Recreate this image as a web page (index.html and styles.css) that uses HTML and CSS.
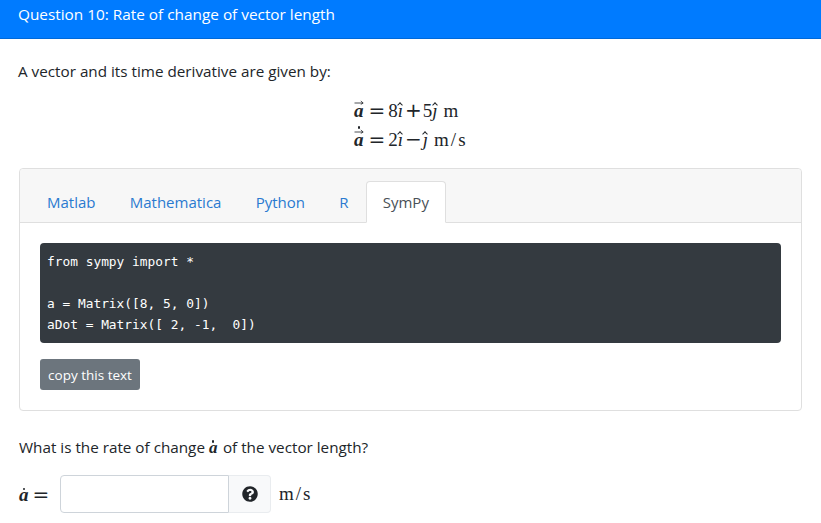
FILE: index.html
```html
<!DOCTYPE html>
<html lang="en">
<head>
    <meta charset="UTF-8">
    <meta name="viewport" content="width=device-width, initial-scale=1.0">
    <title>Question 10</title>
    <link rel="stylesheet" href="styles.css">
</head>
<body>
    <div class="question-header">Question 10: Rate of change of vector length</div>
    <div class="question-body">
        <p class="intro">A vector and its time derivative are given by:</p>
        <div class="equations">
            <div class="eq"><span class="vec"><svg class="arrow" viewBox="0 0 10 5"><path d="M0.5 3H9M6.8 1L9.2 3L6.8 4.4"/></svg><i class="bold">a</i></span><span class="rel">=</span>8<span class="hat">ı</span><span class="bin">+</span>5<span class="hat">ȷ</span><span class="unit">m</span></div>
            <div class="eq"><span class="vec"><span class="dot"></span><svg class="arrow" viewBox="0 0 10 5"><path d="M0.5 3H9M6.8 1L9.2 3L6.8 4.4"/></svg><i class="bold">a</i></span><span class="rel">=</span>2<span class="hat">ı</span><span class="bin">&minus;</span><span class="hat">ȷ</span><span class="unit">m/s</span></div>
        </div>
        <div class="card">
            <div class="card-header">
                <ul class="tabs">
                    <li class="tab">Matlab</li>
                    <li class="tab">Mathematica</li>
                    <li class="tab">Python</li>
                    <li class="tab">R</li>
                    <li class="tab active">SymPy</li>
                </ul>
            </div>
            <div class="card-body">
<pre class="code">from sympy import *

a = Matrix([8, 5, 0])
aDot = Matrix([ 2, -1,  0])</pre>
                <button class="copy-btn">copy this text</button>
            </div>
        </div>
        <p class="ask">What is the rate of change <span class="dotted"><span class="dot"></span><i class="bold">a</i></span> of the vector length?</p>
        <div class="answer">
            <span class="answer-label"><span class="dotted"><span class="dot"></span><i class="bold">a</i></span><span class="rel">=</span></span>
            <div class="input-group">
                <input class="answer-input" type="text">
                <span class="addon">
                    <svg class="help" viewBox="0 0 512 512"><path d="M504 256c0 137-111 248-248 248S8 393 8 256 119 8 256 8s248 111 248 248zM263 90c-54 0-89 23-116 64-4 5-3 13 3 17l35 26c5 4 13 3 17-2 18-23 30-36 58-36 21 0 46 13 46 33 0 15-12 23-33 34-24 14-56 31-56 73v6c0 7 5 12 12 12h56c7 0 12-5 12-12v-3c0-29 85-30 85-109 0-60-62-103-119-103zm-7 254c-26 0-47 21-47 47s21 47 47 47 47-21 47-47-21-47-47-47z"/></svg>
                </span>
            </div>
            <span class="answer-unit">m/s</span>
        </div>
    </div>
</body>
</html>
```

FILE: styles.css
```css
body {
    margin: 0;
    font-family: "Open Sans", Arial, sans-serif;
    font-size: 15.25px;
    line-height: 24px;
    color: #212529;
    background-color: #fff;
}
.question-header {
    height: 39px;
    box-sizing: border-box;
    padding: 2px 18px 0;
    font-size: 15.35px;
    color: #fff;
    background-color: #007bff;
    border-bottom: 1px solid #0069d9;
}
.question-body {
    padding: 0 19px;
}
.intro {
    margin: 0 0 0 -1px;
    padding-top: 20px;
}
.equations {
    display: flex;
    flex-direction: column;
    align-items: flex-start;
    padding: 13px 0 0 335px;
    font-family: "Liberation Serif", serif;
    font-size: 19px;
}
.eq {
    height: 29px;
    line-height: 29px;
    white-space: nowrap;
}
.bold {
    font-family: "Liberation Serif", serif;
    font-weight: bold;
    font-style: italic;
}
.vec, .dotted {
    position: relative;
    display: inline-block;
}
.arrow {
    position: absolute;
    left: 0;
    top: 4px;
    width: 10px;
    height: 5px;
    fill: none;
    stroke: #212529;
    stroke-width: 0.8;
}
.dot {
    position: absolute;
    left: 3.5px;
    top: 1px;
    width: 2.5px;
    height: 2.5px;
    border-radius: 50%;
    background-color: #212529;
}
.rel, .bin {
    font-family: "DejaVu Sans", sans-serif;
    font-size: 20px;
}
.rel {
    margin: 0 3px 0 5px;
}
.bin {
    margin: 0 1px;
}
.unit {
    margin-left: 5px;
    letter-spacing: 2px;
}
.hat {
    position: relative;
    display: inline-block;
    padding-right: 1px;
    font-style: italic;
}
.hat::before {
    content: "";
    position: absolute;
    left: 0.5px;
    top: 7px;
    width: 3px;
    height: 3px;
    border-top: 1px solid #212529;
    border-left: 1px solid #212529;
    transform: rotate(45deg);
}
.card {
    margin-top: 14px;
    border: 1px solid #dfdfdf;
    border-radius: 4px;
}
.card-header {
    height: 54px;
    box-sizing: border-box;
    padding: 12px 10px 0;
    background-color: #f7f7f7;
    border-bottom: 1px solid #dfdfdf;
    border-radius: 4px 4px 0 0;
}
.tabs {
    display: flex;
    margin: 0;
    padding: 0;
    list-style: none;
}
.tab {
    box-sizing: border-box;
    height: 42px;
    padding: 8px 16px;
    margin-right: 0.25px;
    font-size: 15px;
    color: #2a7ad0;
    border: 1px solid transparent;
    border-radius: 4px 4px 0 0;
}
.tab.active {
    color: #495057;
    background-color: #fff;
    border-color: #dfdfdf #dfdfdf #fff;
}
.card-body {
    padding: 20px;
}
.code {
    margin: 0;
    height: 100px;
    box-sizing: border-box;
    padding: 8px 7px;
    font-family: "DejaVu Sans Mono", monospace;
    font-size: 12.85px;
    line-height: 21px;
    color: #fff;
    background-color: #343a40;
    border-radius: 4px;
}
.copy-btn {
    display: block;
    margin-top: 16px;
    width: 100px;
    height: 31px;
    padding: 0;
    font-family: inherit;
    font-size: 13.5px;
    color: #fff;
    background-color: #6c757d;
    border: none;
    border-radius: 3px;
}
.ask {
    margin: 24px 0 0;
}
.ask .dotted {
    margin: 0 1.5px 0 0;
}
.ask .bold {
    font-size: 17px;
}
.ask .dot {
    left: 3px;
    top: 5px;
}
.answer {
    display: flex;
    align-items: center;
    margin-top: 15px;
}
.answer-label {
    width: 41px;
    font-family: "Liberation Serif", serif;
    font-size: 19px;
}
.answer-label .dot {
    left: 3.5px;
    top: 5px;
}
.answer-label .rel {
    margin-left: 4px;
}
.input-group {
    display: flex;
    width: 211px;
    height: 38px;
}
.answer-input {
    flex: 1;
    min-width: 0;
    box-sizing: border-box;
    border: 1px solid #ced4da;
    border-radius: 4px 0 0 4px;
}
.addon {
    display: flex;
    align-items: center;
    justify-content: center;
    width: 42px;
    box-sizing: border-box;
    background-color: #f8f9fa;
    border: 1px solid #e9ecef;
    border-left: none;
    border-radius: 0 4px 4px 0;
}
.help {
    width: 16px;
    height: 16px;
    fill: #212529;
}
.answer-unit {
    margin-left: 8px;
    font-family: "Liberation Serif", serif;
    font-size: 19px;
    letter-spacing: 2px;
}
```
